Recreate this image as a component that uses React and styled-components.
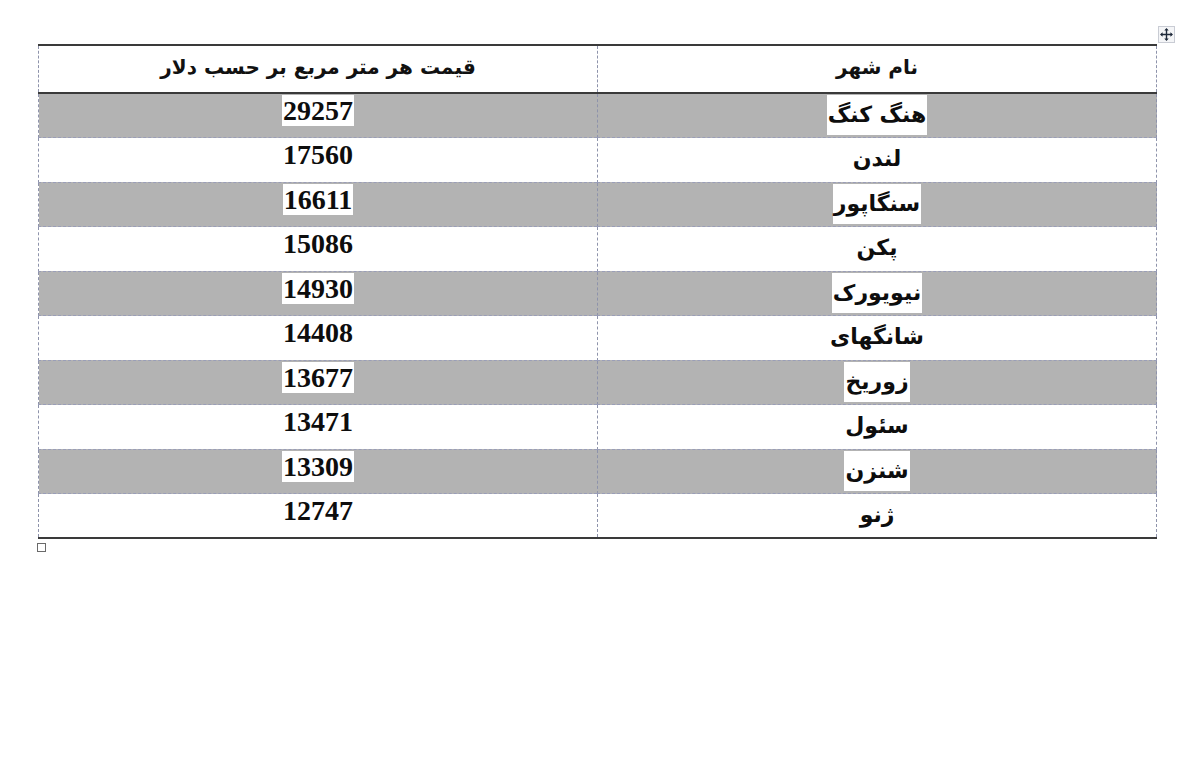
import React from "react";
import styled, { createGlobalStyle } from "styled-components";

const Global = createGlobalStyle`
  html, body { margin: 0; padding: 0; background: #ffffff; }
  body { font-family: "Liberation Serif", "DejaVu Sans", serif; }
`;

const Page = styled.div`
  width: 1200px;
  height: 764px;
  padding: 44px 0 0 38px;
  box-sizing: border-box;
`;

const TableWrap = styled.div`
  position: relative;
  width: 1119px;
`;

const Table = styled.table`
  direction: rtl;
  width: 1119px;
  border-collapse: collapse;
  table-layout: fixed;
  border-top: 2px solid #3a3a3a;
  border-bottom: 2px solid #3a3a3a;
`;

const HeadCell = styled.th`
  height: 48px;
  padding: 9px 0 0;
  vertical-align: top;
  text-align: center;
  font-family: "DejaVu Sans", sans-serif;
  font-weight: bold;
  font-size: 20px;
  color: #111;
  border-left: 1px dashed #8e93ab;
  border-right: 1px dashed #8e93ab;
  border-bottom: 2px solid #3a3a3a;
  box-sizing: border-box;
`;

const Row = styled.tr`
  background: ${(p) => (p.$shaded ? "#b3b3b3" : "#ffffff")};
`;

const Cell = styled.td`
  height: 44.5px;
  padding: 1px 0 0;
  vertical-align: top;
  text-align: center;
  border-left: 1px dashed #8e93ab;
  border-right: 1px dashed #8e93ab;
  border-bottom: 1px dashed #9a9eb8;
  box-sizing: border-box;
`;

const Mark = styled.span`
  display: inline-block;
  background: ${(p) => (p.$shaded ? "#ffffff" : "transparent")};
  color: #0d0d0d;
  font-weight: bold;
  font-family: ${(p) =>
    p.$num ? `"Liberation Serif", serif` : `"DejaVu Sans", sans-serif`};
  font-size: ${(p) => (p.$num ? "28px" : "22px")};
  line-height: ${(p) => (p.$num ? "31px" : "40px")};
  padding: 0 1px;
`;

const MoveHandle = styled.div`
  position: absolute;
  top: -18px;
  right: -18px;
  width: 15px;
  height: 15px;
  border: 1px solid #c9ccd4;
  background: #f4f5f7;
  display: flex;
  align-items: center;
  justify-content: center;
`;

const SizeHandle = styled.div`
  position: absolute;
  bottom: -13px;
  left: -1px;
  width: 7px;
  height: 7px;
  border: 1px solid #6a6a6a;
  background: #fff;
`;

const data = [
  ["هنگ کنگ", "29257"],
  ["لندن", "17560"],
  ["سنگاپور", "16611"],
  ["پکن", "15086"],
  ["نیویورک", "14930"],
  ["شانگهای", "14408"],
  ["زوریخ", "13677"],
  ["سئول", "13471"],
  ["شنزن", "13309"],
  ["ژنو", "12747"],
];

export default function App() {
  return (
    <>
      <Global />
      <Page>
        <TableWrap>
          <MoveHandle>
            <svg width="13" height="13" viewBox="0 0 13 13">
              <path d="M6.5 1v11M1 6.5h11" stroke="#1f2a3a" strokeWidth="1.4" />
              <path d="M6.5 0L4.3 2.6h4.4zM6.5 13L4.3 10.4h4.4zM0 6.5L2.6 4.3v4.4zM13 6.5L10.4 4.3v4.4z" fill="#1f2a3a" />
            </svg>
          </MoveHandle>
          <Table>
            <thead>
              <tr>
                <HeadCell>نام شهر</HeadCell>
                <HeadCell>قیمت هر متر مربع بر حسب دلار</HeadCell>
              </tr>
            </thead>
            <tbody>
              {data.map(([city, price], i) => {
                const shaded = i % 2 === 0;
                return (
                  <Row key={city} $shaded={shaded}>
                    <Cell>
                      <Mark $shaded={shaded}>{city}</Mark>
                    </Cell>
                    <Cell>
                      <Mark $shaded={shaded} $num>
                        {price}
                      </Mark>
                    </Cell>
                  </Row>
                );
              })}
            </tbody>
          </Table>
          <SizeHandle />
        </TableWrap>
      </Page>
    </>
  );
}
